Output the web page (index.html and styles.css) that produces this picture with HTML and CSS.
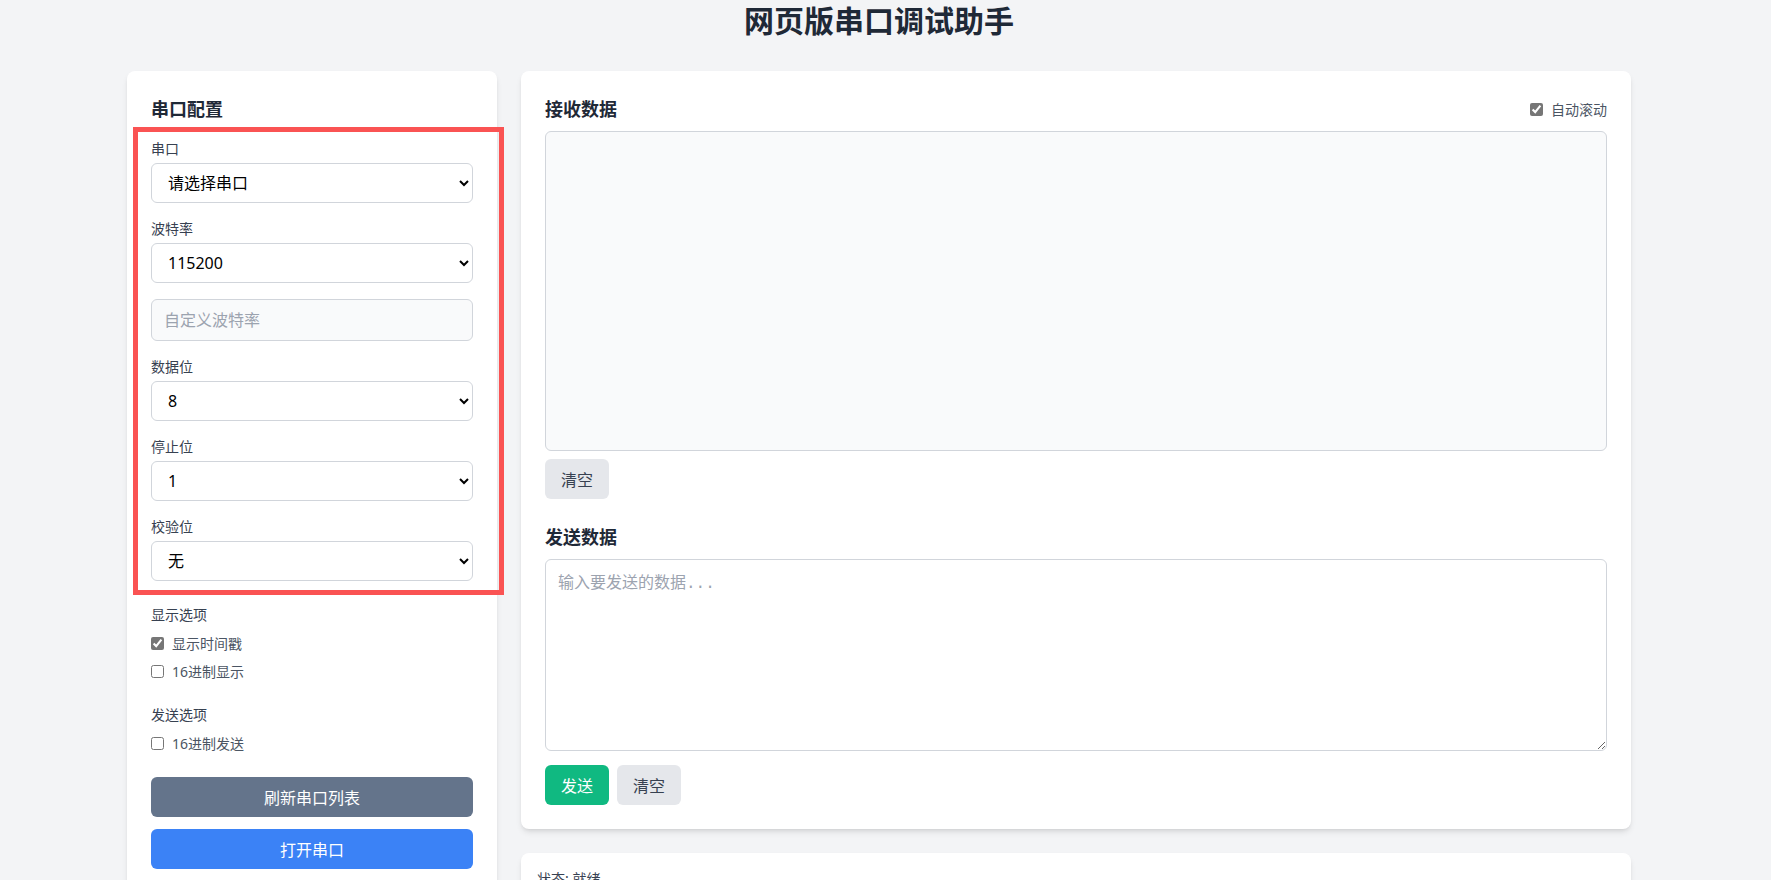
FILE: index.html
```html
<!DOCTYPE html>
<html lang="zh-CN">
<head>
<meta charset="utf-8">
<title>网页版串口调试助手</title>
<link rel="stylesheet" href="styles.css">
</head>
<body>
<div class="page">
  <h1 class="title">网页版串口调试助手</h1>
  <div class="layout">
    <aside class="card config">
      <h2 class="card-title">串口配置</h2>
      <div class="fields">
        <div class="field">
          <label class="field-label">串口</label>
          <select class="control"><option>请选择串口</option></select>
        </div>
        <div class="field">
          <label class="field-label">波特率</label>
          <select class="control"><option>115200</option></select>
          <input class="control custom" type="text" placeholder="自定义波特率">
        </div>
        <div class="field">
          <label class="field-label">数据位</label>
          <select class="control"><option>8</option></select>
        </div>
        <div class="field">
          <label class="field-label">停止位</label>
          <select class="control"><option>1</option></select>
        </div>
        <div class="field">
          <label class="field-label">校验位</label>
          <select class="control"><option>无</option></select>
        </div>
      </div>
      <div class="options">
        <div class="field-label opt-title">显示选项</div>
        <label class="check"><input type="checkbox" checked><span>显示时间戳</span></label>
        <label class="check"><input type="checkbox"><span>16进制显示</span></label>
      </div>
      <div class="options">
        <div class="field-label opt-title">发送选项</div>
        <label class="check"><input type="checkbox"><span>16进制发送</span></label>
      </div>
      <div class="actions">
        <button class="btn btn-block btn-slate">刷新串口列表</button>
        <button class="btn btn-block btn-blue">打开串口</button>
      </div>
      <div class="highlight"></div>
    </aside>
    <main class="main-col">
      <section class="card">
        <div class="section-head">
          <h2 class="card-title">接收数据</h2>
          <label class="check small"><input type="checkbox" checked><span>自动滚动</span></label>
        </div>
        <div class="receive"></div>
        <div class="btn-row">
          <button class="btn btn-gray">清空</button>
        </div>
        <h2 class="card-title send-title">发送数据</h2>
        <textarea class="send" placeholder="输入要发送的数据..."></textarea>
        <div class="btn-row send-row">
          <button class="btn btn-green">发送</button>
          <button class="btn btn-gray">清空</button>
        </div>
      </section>
      <section class="card status">
        <div class="status-text">状态: 就绪</div>
      </section>
    </main>
  </div>
</div>
</body>
</html>
```

FILE: styles.css
```css
* { box-sizing: border-box; }
html, body { margin: 0; }
body {
  background: #f3f4f6;
  font-family: "Noto Sans", "Noto Sans CJK SC", sans-serif;
  color: #1f2937;
  padding-right: 13px;
}
.page {
  max-width: 1536px;
  margin: 0 auto;
  padding: 3px 16px 16px;
}
.title {
  margin: 0 0 32px;
  text-align: center;
  font-size: 30px;
  line-height: 36px;
  font-weight: 700;
  color: #1f2937;
}
.layout {
  display: grid;
  grid-template-columns: 1fr 3fr;
  gap: 24px;
  align-items: start;
}
.card {
  background: #fff;
  border-radius: 8px;
  box-shadow: 0 4px 6px -1px rgba(0,0,0,0.1), 0 2px 4px -2px rgba(0,0,0,0.1);
  padding: 24px;
}
.config { position: relative; }
.card-title {
  margin: 0 0 16px;
  font-size: 18px;
  line-height: 28px;
  font-weight: 700;
  color: #1f2937;
}
.fields { margin-bottom: 24px; }
.field { margin-bottom: 16px; }
.field:last-child { margin-bottom: 0; }
.field-label {
  display: block;
  font-size: 14px;
  line-height: 20px;
  color: #374151;
  margin-bottom: 4px;
}
.control {
  display: block;
  width: 100%;
  height: 40px;
  margin: 0;
  padding: 0 12px;
  font-family: inherit;
  font-size: 16px;
  color: #000;
  background: #fff;
  border: 1px solid #d1d5db;
  border-radius: 6px;
}
.custom {
  margin-top: 16px;
  height: 42px;
  background: #f9fafb;
}
.custom::placeholder { color: #9ca3af; }
.options { margin-bottom: 24px; }
.opt-title { margin-bottom: 8px; }
.check {
  display: flex;
  align-items: center;
  height: 20px;
  margin-bottom: 8px;
  font-size: 14px;
  color: #4b5563;
}
.options .check:last-child { margin-bottom: 0; }
.check input {
  width: 13px;
  height: 13px;
  margin: 0 8px 0 0;
  accent-color: #767676;
}
.check.small { margin-bottom: 0; font-size: 14px; }
.check.small input { margin-right: 8px; }
.actions { display: flex; flex-direction: column; gap: 12px; }
.btn {
  height: 40px;
  padding: 0 16px;
  border: none;
  border-radius: 6px;
  font-family: inherit;
  font-size: 16px;
  cursor: pointer;
}
.btn-block { width: 100%; }
.btn-slate { background: #64748b; color: #fff; }
.btn-blue { background: #3b82f6; color: #fff; }
.btn-gray { background: #e5e7eb; color: #374151; }
.btn-green { background: #10b981; color: #fff; }
.highlight {
  position: absolute;
  left: 6px;
  top: 56px;
  width: 371px;
  height: 468px;
  border: 5px solid #fa5353;
  pointer-events: none;
}
.main-col { display: flex; flex-direction: column; gap: 24px; }
.section-head {
  display: flex;
  justify-content: space-between;
  align-items: center;
  margin-bottom: 8px;
}
.section-head .card-title { margin: 0; }
.receive {
  height: 320px;
  background: #f9fafb;
  border: 1px solid #d1d5db;
  border-radius: 6px;
}
.btn-row { display: flex; gap: 8px; margin-top: 8px; }
.send-title { margin: 24px 0 8px; }
.send {
  display: block;
  width: 100%;
  height: 192px;
  margin: 0;
  padding: 12px;
  font-family: "Liberation Mono", "Noto Sans CJK SC", monospace;
  font-size: 16px;
  line-height: 24px;
  border: 1px solid #d1d5db;
  border-radius: 6px;
  background: #fff;
}
.send::placeholder { color: #9ca3af; }
.send-row { margin-top: 14px; }
.status { padding: 16px; }
.status-text { font-size: 14px; line-height: 20px; color: #374151; }
```
